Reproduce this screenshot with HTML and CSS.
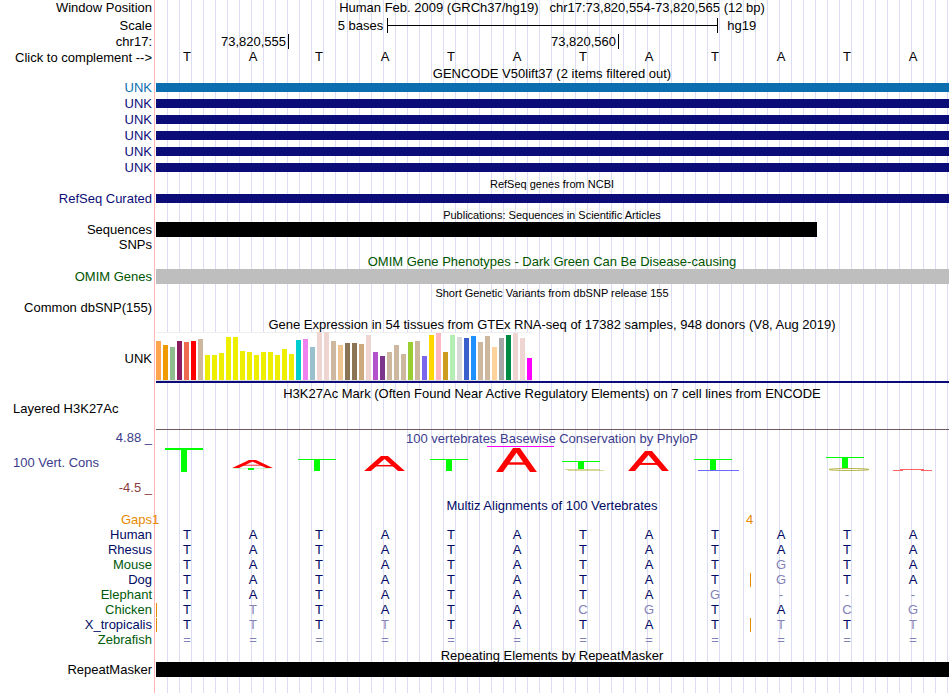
FILE: index.html
```
<!DOCTYPE html>
<html lang="en">

<head>
    <meta charset="UTF-8">
    <title>Human hg19 chr17:73,820,554-73,820,565</title>
    <link rel="stylesheet" href="styles.css">
</head>

<body>
    <main class="browser">
        <div class="row">
            <span class="label">Window Position</span>
            <h1 class="title">Human Feb. 2009 (GRCh37/hg19) &nbsp; chr17:73,820,554-73,820,565 (12 bp)</h1>
        </div>
        <div class="row ruler">
            <span class="label">Scale</span>
            <div class="scale">
                <span class="scale-size">5 bases</span>
                <span class="scale-bar"></span>
                <span class="scale-db">hg19</span>
            </div>
        </div>
        <div class="row">
            <span class="label">chr17:</span>
            <div class="ticks">
                <span class="tick tick-first">73,820,555</span>
                <span class="tick tick-second">73,820,560</span>
            </div>
        </div>
        <div class="row short">
            <button type="button" class="label complement" onclick="complement()">Click to complement --&gt;</button>
            <div class="bases" id="bases"></div>
        </div>

        <h2 class="title track-title">GENCODE V50lift37 (2 items filtered out)</h2>
        <div class="row blue"><span class="label">UNK</span><span class="item"></span></div>
        <div class="row navy"><span class="label">UNK</span><span class="item"></span></div>
        <div class="row navy"><span class="label">UNK</span><span class="item"></span></div>
        <div class="row navy"><span class="label">UNK</span><span class="item"></span></div>
        <div class="row navy"><span class="label">UNK</span><span class="item"></span></div>
        <div class="row navy"><span class="label">UNK</span><span class="item"></span></div>

        <h2 class="title track-title small">RefSeq genes from NCBI</h2>
        <div class="row navy"><span class="label">RefSeq Curated</span><span class="item"></span></div>

        <h2 class="title track-title small">Publications: Sequences in Scientific Articles</h2>
        <div class="row short"><span class="label">Sequences</span><span class="item full partial"></span></div>
        <div class="row"><span class="label">SNPs</span></div>

        <h2 class="title green">OMIM Gene Phenotypes - Dark Green Can Be Disease-causing</h2>
        <div class="row short green"><span class="label">OMIM Genes</span><span class="item full gray"></span></div>

        <h2 class="title small">Short Genetic Variants from dbSNP release 155</h2>
        <div class="row"><span class="label">Common dbSNP(155)</span></div>

        <h2 class="title">Gene Expression in 54 tissues from GTEx RNA-seq of 17382 samples, 948 donors (V8, Aug 2019)</h2>
        <div class="row gtex">
            <span class="label">UNK</span>
            <div class="gtex-plot">
                <div class="tissues" id="tissues"></div>
            </div>
        </div>

        <h2 class="title">H3K27Ac Mark (Often Found Near Active Regulatory Elements) on 7 cell lines from ENCODE</h2>
        <div class="row layered">
            <span class="label left">Layered H3K27Ac</span>
            <span class="baseline"></span>
        </div>

        <div class="row conservation">
            <div class="axis">
                <span class="label">4.88 _</span>
                <span class="label left">100 Vert. Cons</span>
                <span class="label minimum">-4.5 _</span>
            </div>
            <div class="cons-plot">
                <h2 class="title">100 vertebrates Basewise Conservation by PhyloP</h2>
                <svg class="logo" viewBox="0 0 796 67" preserveAspectRatio="none" role="img" aria-label="PhyloP scores">
                    <symbol id="base-a" viewBox="0 0 40 24" preserveAspectRatio="none">
                        <g stroke="#ff0000" fill="none">
                            <line x1="1.4" y1="27" x2="22" y2="-3" stroke-width="5.5" />
                            <line x1="38.6" y1="27" x2="18" y2="-3" stroke-width="5.5" />
                            <line x1="9" y1="15.5" x2="31" y2="15.5" stroke-width="2.4" />
                        </g>
                    </symbol>
                    <g fill="#00ff00">
                        <rect x="11" y="18" width="38" height="2" />
                        <rect x="27" y="18" width="6" height="24" />
                        <rect x="94" y="38" width="6" height="2" />
                        <rect x="144" y="29" width="38" height="1" />
                        <rect x="160" y="29" width="6" height="12" />
                        <rect x="276" y="29" width="38" height="1" />
                        <rect x="292" y="29" width="6" height="12" />
                        <rect x="408" y="31" width="38" height="1" />
                        <rect x="424" y="31" width="6" height="8" />
                        <rect x="540" y="29" width="38" height="1" />
                        <rect x="556" y="29" width="6" height="11" />
                        <rect x="672" y="27" width="38" height="1" />
                        <rect x="688" y="27" width="6" height="11" />
                    </g>
                    <rect x="79" y="38" width="37" height="1" fill="#00ff00" opacity="0.2" />
                    <use href="#base-a" x="78" y="30" width="41" height="8" />
                    <use href="#base-a" x="210" y="26" width="41" height="15" />
                    <use href="#base-a" x="342" y="18" width="41" height="24" />
                    <use href="#base-a" x="474" y="21" width="41" height="20" />
                    <rect x="333" y="16" width="67" height="1" fill="#ff00ff" />
                    <g fill="none" stroke="#9a9a00">
                        <line x1="411" y1="39.5" x2="446" y2="39.5" opacity="0.4" />
                        <line x1="414" y1="40.5" x2="450" y2="40.5" opacity="0.4" />
                        <ellipse cx="695" cy="39.5" rx="20" ry="1" opacity="0.7" />
                    </g>
                    <line x1="544" y1="40.5" x2="585" y2="40.5" stroke="#6a6aff" />
                    <g fill="none" stroke="#ff0000" opacity="0.6">
                        <line x1="739" y1="40.5" x2="749" y2="40.5" />
                        <line x1="746" y1="39.5" x2="770" y2="39.5" />
                        <line x1="767" y1="40.5" x2="778" y2="40.5" />
                    </g>
                </svg>
            </div>
        </div>

        <h2 class="title track-title species">Multiz Alignments of 100 Vertebrates</h2>
        <div class="alignment">
            <table>
                <tbody id="alignment"></tbody>
            </table>
        </div>

        <h2 class="title track-title">Repeating Elements by RepeatMasker</h2>
        <div class="row short"><span class="label">RepeatMasker</span><span class="item full"></span></div>
    </main>

    <script>
        let sequence = "TATATATATATA";

        function drawBases() {
            let html = "";
            for (const base of sequence) {
                html += "<span>" + base + "</span>";
            }
            document.getElementById("bases").innerHTML = html;
        }

        function complement() {
            const pairs = { A: "T", T: "A", C: "G", G: "C" };
            sequence = [...sequence].map(base => pairs[base]).join("");
            drawBases();
        }

        // one [height, color] per tissue
        const tissues = [
            [39, "#ffa54f"], [35, "#ee9a00"], [33, "#8fbc8f"], [39, "#8b1c62"], [38, "#ee6a50"], [39, "#ff0000"],
            [41, "#cdb79e"], [25, "#eeee00"], [25, "#eeee00"], [27, "#eeee00"], [43, "#eeee00"], [43, "#eeee00"],
            [29, "#eeee00"], [28, "#eeee00"], [25, "#eeee00"], [28, "#eeee00"], [28, "#eeee00"], [25, "#eeee00"],
            [31, "#eeee00"], [26, "#eeee00"], [40, "#00cdcd"], [41, "#ee82ee"], [33, "#9ac0cd"], [48, "#eed5d2"],
            [48, "#eed5d2"], [39, "#cdb79e"], [35, "#eec591"], [37, "#8b7355"], [37, "#8b7355"], [36, "#cdaa7d"],
            [45, "#eed5d2"], [28, "#b452cd"], [24, "#7a378b"], [28, "#cdb79e"], [35, "#cdb79e"], [26, "#cdb79e"],
            [38, "#9acd32"], [39, "#cdb79e"], [24, "#7a67ee"], [45, "#ffd700"], [47, "#ffb6c1"], [28, "#cd9b1d"],
            [45, "#b4eeb4"], [43, "#d9d9d9"], [42, "#3a5fcd"], [44, "#1e90ff"], [38, "#cdb79e"], [44, "#cdb79e"],
            [33, "#ffd39b"], [42, "#a6a6a6"], [45, "#008b45"], [47, "#eed5d2"], [42, "#eed5d2"], [22, "#ff00ff"]
        ];
        for (const [height, color] of tissues) {
            const bar = document.createElement("span");
            bar.style.height = height + "px";
            bar.style.backgroundColor = color;
            document.getElementById("tissues").appendChild(bar);
        }

        // name, color class, aligned bases, columns with an insert in front
        const alignment = [
            ["Human", "species", "TATATATATATA", []],
            ["Rhesus", "species", "TATATATATATA", []],
            ["Mouse", "distant", "TATATATATGTA", []],
            ["Dog", "species", "TATATATATGTA", [9]],
            ["Elephant", "distant", "TATATATAG---", []],
            ["Chicken", "distant", "TTTATACGTACG", [0]],
            ["X_tropicalis", "species", "TTTTTATATTTT", [0, 9]],
            ["Zebrafish", "distant", "============", []]
        ];
        const human = alignment[0][2];
        let rows = "<tr class='gaps'><th scope='row'>Gaps</th>";
        for (let i = 0; i < 12; i++) {
            const count = { 0: "1", 9: "4" }[i];
            rows += "<td>" + (count ? "<span class='count'>" + count + "</span>" : "") + "</td>";
        }
        rows += "</tr>";
        for (const [name, group, bases, inserts] of alignment) {
            rows += "<tr><th scope='row' class='" + group + "'>" + name + "</th>";
            for (let i = 0; i < bases.length; i++) {
                const mark = inserts.includes(i) ? "<span class='insert'></span>" : "";
                const kind = bases[i] == human[i] ? "match" : "mismatch";
                rows += "<td class='" + kind + "'>" + mark + bases[i] + "</td>";
            }
            rows += "</tr>";
        }
        document.getElementById("alignment").innerHTML = rows;
        drawBases();
    </script>
</body>

</html>
```
FILE: styles.css
```
body {
    margin: 0;
    font-family: "Liberation Sans", Arial, Helvetica, sans-serif;
    font-size: 13px;
    line-height: 15px;
    color: #000;
}

/* red edge of the label column, then a guide line every 12px */
.browser {
    min-height: 100vh;
    background:
        linear-gradient(to right, #fff 154px, #ffb4b4 154px, #ffb4b4 155px, #fff 155px, #fff 156px, transparent 156px),
        repeating-linear-gradient(to right, #dcdcf5 0, #dcdcf5 1px, transparent 1px, transparent 12px) 11px 0;
}

.row {
    display: grid;
    grid-template-columns: 154px 1fr;
    align-items: start;
    min-height: 16px;
}

.short {
    min-height: 15px;
}

.label {
    padding-right: 2px;
    text-align: right;
    white-space: nowrap;
}

.left {
    padding-left: 13px;
    text-align: left;
}

.title {
    margin: 0 0 0 154px;
    padding-top: 2px;
    font-size: 13px;
    font-weight: normal;
    line-height: 14px;
    text-align: center;
    white-space: nowrap;
}

.row .title {
    margin-left: 0;
}

h1.title {
    padding-top: 0;
    line-height: 15px;
}

.track-title {
    line-height: 13px;
}

.small {
    font-size: 11px;
}

.complement {
    border: 0;
    padding: 0 2px 0 0;
    background: none;
    color: inherit;
    font: inherit;
    cursor: pointer;
}

/* ruler */
.ruler {
    min-height: 18px;
    align-items: center;
}

.scale {
    display: flex;
    align-items: center;
}

.scale-size {
    box-sizing: border-box;
    width: 29.3%;
    padding-right: 4px;
    text-align: right;
}

.scale-bar {
    box-sizing: border-box;
    width: 41.6%;
    height: 15px;
    border: solid #000;
    border-width: 0 1px;
    background: linear-gradient(#000, #000) center / 100% 1px no-repeat;
}

.scale-db {
    padding-left: 9px;
}

.ticks {
    display: grid;
    grid-template-columns: repeat(12, 1fr);
    margin: 0 1px 0 3px;
}

.tick {
    border-right: 1px solid #000;
    padding-right: 2px;
    text-align: right;
}

.tick-first {
    grid-column: 1 / 3;
}

.tick-second {
    grid-column: 3 / 8;
}

.bases {
    display: grid;
    grid-template-columns: repeat(12, 1fr);
    padding-right: 4px;
    line-height: 13px;
    text-align: center;
}

/* items */
.item {
    height: 9px;
    margin: 3px 1px 0 2px;
    background-color: #000;
}

.full {
    height: 15px;
    margin-top: 0;
}

.partial {
    width: 83%;
}

.blue {
    color: #0c6eaf;
}

.navy {
    color: #0c0c78;
}

.blue .item,
.navy .item {
    background-color: currentColor;
}

.green {
    color: #005500;
}

.gray {
    background-color: #bebebe;
}

/* gene expression */
.gtex {
    min-height: 53px;
}

.gtex .label {
    align-self: center;
}

.gtex-plot {
    margin: 0 1px 0 2px;
    border-bottom: 2px solid #0c0c78;
}

.tissues {
    display: flex;
    align-items: flex-end;
    gap: 2px;
    width: max-content;
    height: 48px;
    border-bottom: 1px solid #ddd;
    background: linear-gradient(#eee, #eee) top / 100% 1px no-repeat #fff;
}

.tissues span {
    width: 5px;
}

/* layered marks and conservation */
.layered {
    min-height: 29px;
    align-items: stretch;
}

.baseline {
    margin: 0 1px 0 2px;
    border-bottom: 1px solid #6e5a5a;
}

.conservation {
    color: #3c3c8c;
}

.axis {
    display: flex;
    flex-direction: column;
    gap: 10px;
}

.minimum {
    color: #8c3c3c;
}

.cons-plot {
    display: grid;
    height: 67px;
}

.cons-plot .title,
.logo {
    grid-area: 1 / 1;
}

.logo {
    width: 100%;
    height: 67px;
}

/* alignment */
.alignment {
    padding-right: 4px;
}

table {
    width: 100%;
    table-layout: fixed;
    border-collapse: collapse;
}

th,
td {
    position: relative;
    height: 15px;
    padding: 0;
    font-weight: normal;
    text-align: center;
}

th {
    width: 152px;
    padding-right: 2px;
    text-align: right;
}

.gaps {
    color: #e68a00;
}

.species,
.match {
    color: #000a64;
}

.distant {
    color: #005a0a;
}

.mismatch {
    color: #8282b4;
}

.count {
    position: absolute;
    top: 0;
    left: -2px;
}

.insert {
    position: absolute;
    top: 1px;
    left: 2px;
    width: 1px;
    height: 14px;
    background-color: #e68a00;
}
```
